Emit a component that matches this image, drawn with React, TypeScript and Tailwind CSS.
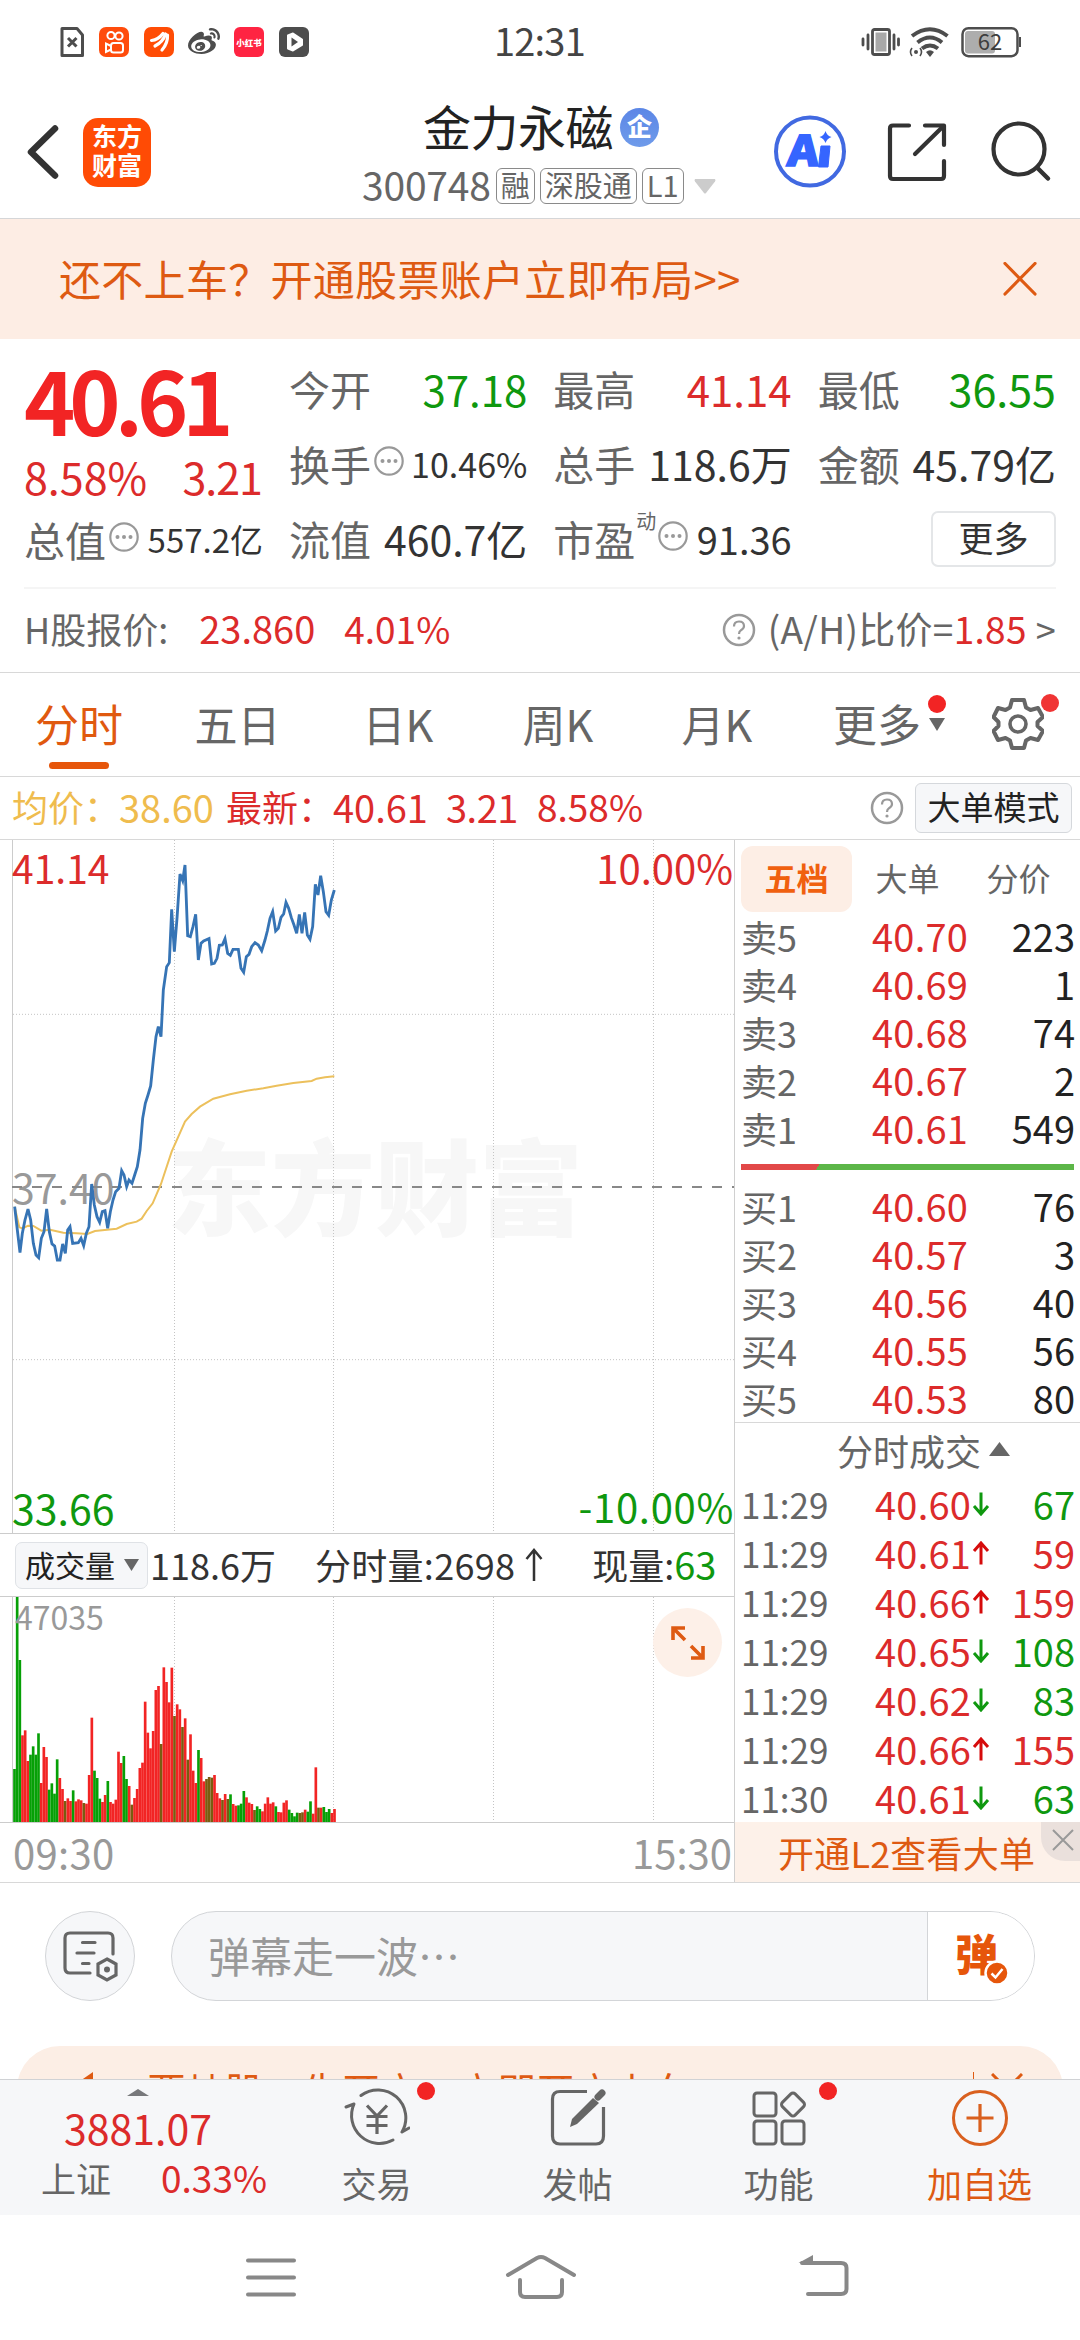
import type { ReactNode } from 'react';
import { FaWeibo } from 'react-icons/fa';

const RED = 'text-[#dc2b2b]';
const GREEN = 'text-[#0f980f]';

interface Level {
  label: string;
  price: string;
  volume: string;
}

interface Tick {
  time: string;
  price: string;
  up: boolean;
  volume: string;
}

const sells: Level[] = [
  { label: '卖5', price: '40.70', volume: '223' },
  { label: '卖4', price: '40.69', volume: '1' },
  { label: '卖3', price: '40.68', volume: '74' },
  { label: '卖2', price: '40.67', volume: '2' },
  { label: '卖1', price: '40.61', volume: '549' },
];

const buys: Level[] = [
  { label: '买1', price: '40.60', volume: '76' },
  { label: '买2', price: '40.57', volume: '3' },
  { label: '买3', price: '40.56', volume: '40' },
  { label: '买4', price: '40.55', volume: '56' },
  { label: '买5', price: '40.53', volume: '80' },
];

const ticks: Tick[] = [
  { time: '11:29', price: '40.60', up: false, volume: '67' },
  { time: '11:29', price: '40.61', up: true, volume: '59' },
  { time: '11:29', price: '40.66', up: true, volume: '159' },
  { time: '11:29', price: '40.65', up: false, volume: '108' },
  { time: '11:29', price: '40.62', up: false, volume: '83' },
  { time: '11:29', price: '40.66', up: true, volume: '155' },
  { time: '11:30', price: '40.61', up: false, volume: '63' },
];

// chart coordinates are in thirds of a pixel
const pricePoints =
  '44,1130 52,1200 60,1268 67,1210 75,1170 84,1137 92,1170 100,1240 108,1275 116,1283 124,1225 132,1205 140,1137 148,1205 156,1242 164,1248 172,1290 180,1290 188,1242 196,1270 203,1200 210,1190 218,1240 235,1238 243,1225 251,1247 259,1210 267,1190 275,1062 283,1125 291,1160 299,1177 307,1145 315,1142 323,1195 331,1145 339,1110 347,1085 357,1075 365,1022 372,1035 380,1070 387,1050 396,1060 404,1035 412,1010 420,960 428,865 436,820 444,795 452,768 460,690 468,620 475,590 483,620 490,480 500,410 508,398 515,238 523,365 531,265 540,132 548,152 555,105 563,317 571,320 579,290 587,253 595,390 603,340 611,333 627,326 635,402 643,400 651,385 658,346 667,345 675,326 683,370 691,376 699,358 715,358 723,415 731,427 739,380 747,373 755,350 765,338 775,345 785,362 795,330 802,303 810,265 818,245 827,303 835,295 843,262 851,252 858,217 866,235 874,263 882,285 890,310 898,253 906,310 914,247 922,315 930,328 938,290 946,163 954,195 962,137 970,185 978,245 986,256 994,210 1003,180';

const averagePoints =
  '44,1130 58,1192 68,1195 84,1187 100,1188 124,1202 150,1199 190,1208 230,1210 262,1212 285,1203 350,1196 380,1182 410,1175 425,1166 440,1143 458,1120 483,1062 515,965 555,875 575,852 600,830 640,806 690,793 740,782 790,775 830,767 880,759 935,753 950,746 975,742 1003,739';

const volumeBars =
  '807g 290g 480g 706r 691r 783r 764g 739g 764g 700g 849r 741r 771r 869g 850g 881g 778g 834r 867r 903m 895r 903r 871g 904r 898r 901r 909m 911r 825r 653r 812g 834g 896g 906r 885r 843g 906r 911r 899r 755r 789r 768g 837g 858r 914m 894r 867r 804r 788r 605r 698r 745r 693r 570r 558r 732m 502r 546r 607r 503r 648m 613r 628r 681m 655r 779m 703r 812r 849r 750g 774r 844r 837m 831m 833m 825r 879r 895r 900m 882r 897m 883g 912r 917r 916g 911g 873g 892r 908r 912r 930m 919g 927g 934r 911r 892r 911r 907r 919g 936r 937r 908r 901r 929g 939g 949g 938g 939m 937m 929r 935g 904g 941r 802r 923m 923r 921g 936g 927g 939r 927r'.split(' ');

const barColors: Record<string, string> = { r: '#f22424', g: '#06a006', m: '#7a5c10' };

const gridXs = [523.5, 1000.5, 1480.5, 1960.5];

const StatusBar = () => (
  <div className="flex h-[84px] items-center pl-[60px] pr-[57px]">
    <svg width="250" height="32" viewBox="0 0 250 32" className="shrink-0">
      <path d="M2 2.5H17L22.5 9V29.5H2Z" fill="none" stroke="#4d4d4d" strokeWidth="3" strokeLinejoin="round" />
      <path d="M8 12L16.500 20.500M16.500 12L8 20.500" stroke="#4d4d4d" strokeWidth="3" />
      <rect x="39" y="1" width="30" height="30" rx="7" fill="#ff4c0c" />
      <g fill="none" stroke="#fff" strokeWidth="2">
        <circle cx="51" cy="9.500" r="3.600" />
        <circle cx="59" cy="10" r="3.600" />
        <rect x="51" y="17" width="12" height="9.500" rx="2.500" />
        <path d="M51 20L46 17.500V26L51 23.500" />
      </g>
      <rect x="84" y="1" width="30" height="30" rx="7" fill="#ff4c05" />
      <g fill="none" stroke="#fff" strokeWidth="3.200" strokeLinecap="round">
        <path d="M91.500 14.500Q98 14 103 7.500" />
        <path d="M95 20Q103 16 105.500 8" />
        <path d="M102 24Q108 17 107.500 9" />
      </g>
      <rect x="174" y="1" width="30" height="30" rx="6" fill="#ff2442" />
      <text x="189" y="19.500" textAnchor="middle" fontSize="8.500" fontWeight="900" fill="#fff">小红书</text>
      <rect x="219" y="1" width="30" height="30" rx="6" fill="#4d4d4d" />
      <path d="M228 9.500L233 7.500L242 13.500V19L233 24.500L228 22.500Z" fill="#fff" stroke="#fff" strokeWidth="2" strokeLinejoin="round" />
      <path d="M231.500 11.500V20.500L238 16Z" fill="#4d4d4d" />
      <FaWeibo x="128" y="0" size={32} color="#4d4d4d" />
    </svg>
    <span className="ml-[184px] pb-1 text-[38px] leading-none tracking-[-0.800px] text-[#444]">12:31</span>
    <svg width="162" height="32" viewBox="0 0 162 32" className="ml-auto shrink-0 overflow-visible">
      <g stroke="#4d4d4d" strokeWidth="2.800" strokeLinecap="round">
        <path d="M2 13V19M7 9V23M33 9V23M37.500 13V19" />
        <rect x="11.500" y="3.500" width="17" height="25" rx="2" fill="none" />
      </g>
      <rect x="14.500" y="6.500" width="11" height="19" fill="#a8a8a8" />
      <g fill="none" stroke="#4d4d4d" strokeWidth="4">
        <path d="M51 10Q69 -3.500 86.500 10" />
        <path d="M56.500 16.500Q69 6.500 81 16.500" />
        <path d="M61 22.500Q69 16.500 77 22.500" />
      </g>
      <path d="M65 26Q69 22.500 73 26L69 31Z" fill="#4d4d4d" />
      <circle cx="55" cy="26" r="2" fill="#4d4d4d" />
      <path d="M51 22Q48 26 51 30M59 22Q62 26 59 30" fill="none" stroke="#4d4d4d" strokeWidth="1.600" />
      <rect x="101.500" y="2.200" width="55" height="28" rx="6" fill="none" stroke="#4d4d4d" strokeWidth="2.500" />
      <rect x="104" y="5" width="30" height="22.500" rx="3" fill="#adadad" />
      <path d="M159 11V21" stroke="#4d4d4d" strokeWidth="2" />
      <text x="129" y="24" textAnchor="middle" fontSize="22" fill="#3d3d3d">62</text>
    </svg>
  </div>
);

const Tag = ({ children }: { children: ReactNode }) => (
  <span className="flex h-[36px] items-center rounded-[6px] border border-[#8a8a8a] px-[4px] pb-[3px] text-[29px] leading-none text-[#666]">
    {children}
  </span>
);

const Header = () => (
  <div className="flex h-[135px] items-start border-b border-[#d5d6d8] pl-[26px]">
    <svg width="34" height="56" viewBox="0 0 34 56" className="mt-[40px]">
      <path d="M29 4.500L5 28L29 51.500" fill="none" stroke="#333" strokeWidth="6.500" strokeLinecap="round" strokeLinejoin="round" />
    </svg>
    <div className="ml-[23px] mt-[34px] flex h-[69px] w-[68px] flex-col items-center rounded-[15px] bg-[#ff4b05] pt-[3px] text-[25px] font-bold leading-[29px] text-white">
      <span>东方</span>
      <span>财富</span>
    </div>
    <div className="ml-[211px] flex flex-col">
      <div className="ml-[61px] mt-[16px] flex items-center">
        <span className="text-[48px] leading-[50px] tracking-[-0.500px] text-[#222]">金力永磁</span>
        <span className="ml-[7px] mt-[5px] flex h-[39px] w-[39px] items-center justify-center rounded-full bg-gradient-to-b from-[#5b86e6] to-[#6f9bea] pb-1 text-[25px] font-black leading-none text-white">
          企
        </span>
      </div>
      <div className="mt-[18px] flex h-[36px] items-center">
        <span className="mr-[5px] pb-[4px] text-[39px] leading-none tracking-[-0.200px] text-[#666]">300748</span>
        <div className="flex gap-[5px]">
          <Tag>融</Tag>
          <Tag>深股通</Tag>
          <Tag>L1</Tag>
        </div>
        <svg width="22" height="15" viewBox="0 0 22 15" className="ml-[10px]">
          <path d="M1 0H21Q22 1 21 2.500L12 14Q11 15 10 14L1 2.500Q0 1 1 0Z" fill="#ccc" />
        </svg>
      </div>
    </div>
    <div className="ml-auto mr-[28px] mt-[30px] flex items-start">
      <svg width="74" height="76" viewBox="0 0 74 76">
        <circle cx="37" cy="37.500" r="34" fill="none" stroke="#4169e1" strokeWidth="4" />
        <text x="14" y="52" fontSize="42" fontWeight="900" fill="#3565ff" stroke="#3565ff" strokeWidth="1.500" transform="skewX(-5) translate(4 0)" textLength="31" lengthAdjust="spacingAndGlyphs">A</text>
        <path d="M48 32H57L55 53H45.500Z" fill="#3565ff" stroke="#3565ff" strokeLinejoin="round" />
        <path d="M52.500 17Q54 22 58.500 23Q54 24.500 52.500 29Q51 24.500 46.500 23Q51 22 52.500 17Z" fill="#3565ff" />
      </svg>
      <svg width="62" height="62" viewBox="0 0 62 62" className="ml-[39px] mt-[7px]">
        <g fill="none" stroke="#333" strokeWidth="4.200" strokeLinecap="round" strokeLinejoin="round">
          <path d="M23 4.500H7Q4 4.500 4 7.500V55Q4 58 7 58H55Q58 58 58 55V40" />
          <path d="M39 4.500H58V24" />
          <path d="M57 5.500L29 33" />
        </g>
      </svg>
      <svg width="62" height="64" viewBox="0 0 62 64" className="ml-[42px] mt-[6px]">
        <circle cx="29" cy="29" r="25.500" fill="none" stroke="#333" strokeWidth="4.200" />
        <path d="M47 47.500L58 58.500" stroke="#333" strokeWidth="4.500" strokeLinecap="round" />
      </svg>
    </div>
  </div>
);

const PromoBanner = () => (
  <div className="flex h-[120px] items-center justify-between bg-[#fdede4] pl-[59px] pr-[43px]">
    <span className="pb-[2px] text-[42px] leading-none tracking-[0.300px] text-[#de5a12]">还不上车？开通股票账户立即布局&gt;&gt;</span>
    <svg width="34" height="34" viewBox="0 0 34 34" className="mb-[1px]">
      <path d="M2 1.500L32 32M32 1.500L2 32" stroke="#de5a12" strokeWidth="3.200" strokeLinecap="round" />
    </svg>
  </div>
);

const DotsIcon = () => (
  <svg width="30" height="30" viewBox="0 0 30 30" className="mb-[5px] ml-[3px] shrink-0">
    <circle cx="15" cy="15" r="13.700" fill="none" stroke="#999" strokeWidth="2.200" />
    <circle cx="8.500" cy="15" r="2" fill="#999" />
    <circle cx="15" cy="15" r="2" fill="#999" />
    <circle cx="21.500" cy="15" r="2" fill="#999" />
  </svg>
);

const HelpIcon = () => (
  <svg width="34" height="34" viewBox="0 0 34 34" className="shrink-0">
    <circle cx="17" cy="17" r="15" fill="none" stroke="#999" strokeWidth="2.500" />
    <path d="M12 13.500Q12 8.500 17 8.500Q22 8.500 22 13Q22 15.500 19 17.200Q17 18.500 17 21" fill="none" stroke="#999" strokeWidth="2.200" />
    <circle cx="17" cy="25" r="1.600" fill="#999" />
  </svg>
);

interface StatProps {
  label: string;
  value: string;
  color?: string;
  sup?: string;
  dots?: boolean;
  size?: string;
}

const Stat = ({ label, value, color = 'text-[#333]', sup, dots, size = 'text-[41px]' }: StatProps) => (
  <div className="flex h-[75px] items-center justify-between whitespace-nowrap leading-none">
    <div className="flex items-center text-[41px] text-[#666]">
      {label}
      {sup && <span className="-mr-[1px] mb-[36px] ml-[1px] text-[20px]">{sup}</span>}
      {dots && <DotsIcon />}
    </div>
    <span className={`${size} ${color}`}>{value}</span>
  </div>
);

const Quote = () => (
  <div className="h-[334px] border-b border-[#d8d8d8] px-[24px] pt-[12px]">
    <div className="flex h-[238px] gap-[26px] border-b-2 border-[#f5f5f5]">
      <div className="w-[239px] shrink-0 whitespace-nowrap leading-none">
        <div className="flex h-[95px] items-center text-[87px] font-bold tracking-[-6px] text-[#f22424]">40.61</div>
        <div className={`flex h-[60px] items-center justify-between pr-[1px] text-[43px] ${RED}`}>
          <span>8.58%</span>
          <span className="tracking-[-1px]">3.21</span>
        </div>
        <div className="flex h-[66px] items-center justify-between text-[41px] text-[#666]">
          <div className="flex items-center">
            总值
            <DotsIcon />
          </div>
          <span className="text-[33px] text-[#333]">557.2亿</span>
        </div>
      </div>
      <div className="grid flex-1 grid-cols-3 content-start gap-x-[26px]">
        <Stat label="今开" value="37.18" color={GREEN} size="text-[42px]" />
        <Stat label="最高" value="41.14" color={RED} size="text-[42px]" />
        <Stat label="最低" value="36.55" color={GREEN} size="text-[43px]" />
        <Stat label="换手" value="10.46%" dots size="text-[34px]" />
        <Stat label="总手" value="118.6万" />
        <Stat label="金额" value="45.79亿" />
        <Stat label="流值" value="460.7亿" />
        <Stat label="市盈" sup="动" value="91.36" dots size="text-[38px]" />
        <div className="flex h-[75px] items-center justify-end">
          <button className="h-[56px] w-[125px] rounded-[7px] border-2 border-[#e4e6e8] pb-[4px] text-[35px] leading-none text-[#333]">更多</button>
        </div>
      </div>
    </div>
    <div className="flex h-[78px] items-center whitespace-nowrap leading-none">
      <span className="text-[36px] text-[#666]">H股报价:</span>
      <span className={`ml-[31px] text-[38px] ${RED}`}>23.860</span>
      <span className={`ml-[29px] text-[37px] ${RED}`}>4.01%</span>
      <div className="ml-auto flex items-center text-[37px] tracking-[0.300px] text-[#666]">
        <div className="mr-[12px] mt-[4px]">
          <HelpIcon />
        </div>
        (A/H)比价=<span className={RED}>1.85</span>
        <span className="ml-[9px] text-[36px]">&gt;</span>
      </div>
    </div>
  </div>
);

const GearIcon = () => (
  <svg width="52" height="54" viewBox="0 0 52 54">
    <path
      d="M20 3H32L34 10.500L38.500 13L46 11L51 20L45.500 25V29L51 34L46 43L38.500 41L34 43.500L32 51H20L18 43.500L13.500 41L6 43L1.500 34L6.500 29V25L1.500 20L6 11L13.500 13L18 10.500Z"
      fill="none"
      stroke="#666"
      strokeWidth="4"
      strokeLinejoin="round"
    />
    <circle cx="26" cy="27" r="8" fill="none" stroke="#666" strokeWidth="3.600" />
  </svg>
);

const ChartTabs = () => (
  <div className="flex h-[104px] border-b border-[#d8d8d8] text-[43px] leading-[101px] text-[#666]">
    <div className="relative w-[158px] text-center text-[44px] text-[#e0590f]">
      分时
      <i className="absolute bottom-[7px] left-[49px] h-[7px] w-[60px] rounded-full bg-[#e6560b]" />
    </div>
    <div className="w-[159px] text-center">五日</div>
    <div className="w-[162px] text-center">日K</div>
    <div className="w-[158px] text-center">周K</div>
    <div className="w-[160px] text-center">月K</div>
    <div className="relative ml-[36px] w-[120px] text-[44px]">
      更多
      <i className="absolute left-[95px] top-[22px] h-[18px] w-[18px] rounded-full bg-[#f22424]" />
      <svg width="16" height="13" viewBox="0 0 16 13" className="absolute left-[96px] top-[45px]">
        <path d="M0 0H16L8 13Z" fill="#666" />
      </svg>
    </div>
    <div className="relative ml-[39px] mt-[24px]">
      <GearIcon />
      <i className="absolute left-[49px] top-[-3px] h-[18px] w-[18px] rounded-full bg-[#f03434]" />
    </div>
  </div>
);

const PriceSummary = () => (
  <div className="flex h-[63px] items-center whitespace-nowrap border-b border-[#d8d8d8] pl-[12px] pr-[8px] text-[38px] leading-none">
    <span className="flex w-[214px] pb-[2px] text-[#efbc4e]">
      <span className="w-[107px] text-[36px]">均价：</span>38.60
    </span>
    <span className={`flex pb-[2px] ${RED}`}>
      <span className="w-[107px] text-[36px]">最新：</span>
      <span className="w-[113px]">40.61</span>
      <span className="w-[91px] tracking-[-0.500px]">3.21</span>
      <span className="text-[37px]">8.58%</span>
    </span>
    <div className="ml-auto mr-[11px]">
      <HelpIcon />
    </div>
    <button className="h-[50px] w-[157px] rounded-[6px] border border-[#d5d8dc] bg-[#f6f7f9] pb-[3px] text-[33px] leading-none text-[#222]">大单模式</button>
  </div>
);

const PriceChart = () => (
  <div className="relative h-[694px] border-b border-[#ccc]">
    <span className="absolute left-[167px] top-[283px] text-[104px] font-black leading-[120px] text-[#f7f7f7]">东方财富</span>
    <span className="absolute left-[12px] top-[326px] text-[41px] leading-[40px] text-[#999]">37.40</span>
    <svg width="734" height="693" viewBox="0 30 2202 2079" className="absolute left-0 top-0">
      <g stroke="#c4c4c4" strokeWidth="3" strokeDasharray="3 6">
        {gridXs.map((x) => (
          <path key={x} d={`M${x} 30V2109`} />
        ))}
        <path d="M39 553H2202M39 1589H2202" />
      </g>
      <path d="M37.500 30V2109" stroke="#ccc" strokeWidth="3" />
      <path d="M36 1071H2202" stroke="#888" strokeWidth="6" strokeDasharray="30 30" />
      <polyline points={averagePoints} fill="none" stroke="#ecc05c" strokeWidth="6" />
      <polyline points={pricePoints} fill="none" stroke="#3674b5" strokeWidth="8.500" />
    </svg>
    <span className={`absolute left-[12px] top-[7px] text-[39px] leading-[40px] ${RED}`}>41.14</span>
    <span className={`absolute right-[1px] top-[7px] text-[40px] leading-[40px] ${RED}`}>10.00%</span>
    <span className={`absolute bottom-[6px] left-[12px] text-[41px] leading-[40px] ${GREEN}`}>33.66</span>
    <span className={`absolute bottom-[7px] right-[0px] text-[40px] leading-[40px] tracking-[0.700px] ${GREEN}`}>-10.00%</span>
  </div>
);

const VolumeChart = () => (
  <div className="relative h-[226px] border-b border-[#ccc]">
    <svg width="734" height="225" viewBox="0 291 2202 675" className="absolute left-0 top-0">
      <g stroke="#c4c4c4" strokeWidth="3" strokeDasharray="3 6">
        {gridXs.map((x) => (
          <path key={x} d={`M${x} 291V966`} />
        ))}
      </g>
      <path d="M37.500 291V966" stroke="#ccc" strokeWidth="3" />
      {volumeBars.map((bar, i) => {
        const top = Number(bar.slice(0, 3));
        return <rect key={i} x={39.5 + i * 8} y={top} width="8" height={966 - top} fill={barColors[bar[3]]} />;
      })}
    </svg>
    <span className="absolute left-[15px] top-[3px] text-[32px] leading-[32px] text-[#999]">47035</span>
    <div className="absolute left-[653px] top-[11px] flex h-[69px] w-[69px] items-center justify-center rounded-full bg-[#fdf0e8]">
      <svg width="36" height="36" viewBox="0 0 36 36">
        <path d="M3 15V3H15M4 4L15 15M21 21L32 32M21 33H33V21" fill="none" stroke="#de5a12" strokeWidth="3.600" />
      </svg>
    </div>
  </div>
);

const VolumeHeader = () => (
  <div className="flex h-[63px] items-center whitespace-nowrap border-b border-[#ccc] pl-[15px] text-[36px] leading-none text-[#333]">
    <button className="flex h-[47px] w-[133px] items-center rounded-[7px] border border-[#dfe2e6] bg-[#f6f7f9] pl-[9px] text-[30px] text-[#222]">
      <span className="pb-[3px]">成交量</span>
      <svg width="15" height="12" viewBox="0 0 15 12" className="ml-[9px]">
        <path d="M0 0H15L7.500 12Z" fill="#666" />
      </svg>
    </button>
    <span className="ml-[2px] pb-[2px]">118.6万</span>
    <span className="ml-[39px] pb-[2px] tracking-[0.300px]">分时量:2698</span>
    <svg width="18" height="34" viewBox="0 0 18 34" className="ml-[10px]">
      <path d="M9 33V2M1.500 11L9 2L16.500 11" fill="none" stroke="#333" strokeWidth="2.500" />
    </svg>
    <span className="ml-[49px] pb-[2px]">
      现量:<span className={`text-[38px] ${GREEN}`}>63</span>
    </span>
  </div>
);

const LevelRow = ({ level }: { level: Level }) => (
  <div className="flex h-[48px] items-center text-[38px] leading-none">
    <span className="w-[86px] text-[36px] text-[#666]">{level.label}</span>
    <span className={`w-[141px] text-right tracking-[0.200px] ${RED}`}>{level.price}</span>
    <span className="ml-auto text-[#222]">{level.volume}</span>
  </div>
);

const TickArrow = ({ up }: { up: boolean }) => (
  <svg width="18" height="24" viewBox="0 0 18 24" className="ml-[1px]">
    {up ? (
      <path d="M9 23.500V2.500M2 10L9 2L16 10" fill="none" stroke="#d60b0b" strokeWidth="3" />
    ) : (
      <path d="M9 0.500V21.500M2 14L9 22L16 14" fill="none" stroke="#0f980f" strokeWidth="3" />
    )}
  </svg>
);

const OrderBook = () => (
  <div className="flex flex-1 flex-col border-l border-[#d0d0d0]">
    <div className="mt-[6px] flex h-[66px] pl-[6px] text-[32px] leading-[63px] text-[#666]">
      <span className="w-[111px] rounded-[12px] bg-[#fdeee5] text-center font-bold text-[#f0600f]">五档</span>
      <span className="w-[111px] text-center">大单</span>
      <span className="w-[111px] text-center">分价</span>
    </div>
    <div className="pl-[6px] pr-[5px]">
      {sells.map((level) => (
        <LevelRow key={level.label} level={level} />
      ))}
    </div>
    <div className="mx-[6px] mb-[12px] mt-[12px] h-[6px] bg-[linear-gradient(120deg,#e24848_68px,#5cb648_68px)]" />
    <div className="pl-[6px] pr-[5px]">
      {buys.map((level) => (
        <LevelRow key={level.label} level={level} />
      ))}
    </div>
    <div className="flex h-[57px] items-center justify-center border-t border-[#d8d8d8] pl-[32px] text-[36px] leading-none text-[#666]">
      <span className="pb-[3px]">分时成交</span>
      <svg width="21" height="14" viewBox="0 0 21 14" className="ml-[8px] mb-[4px]">
        <path d="M0 14H21L10.500 0Z" fill="#666" />
      </svg>
    </div>
    <div className="pl-[6px] pr-[5px]">
      {ticks.map((tick, i) => (
        <div key={i} className="flex h-[49px] items-center text-[38px] leading-none">
          <span className="w-[86px] text-[35px] text-[#666]">{tick.time}</span>
          <span className={`w-[144px] text-right tracking-[0.200px] ${RED}`}>{tick.price}</span>
          <TickArrow up={tick.up} />
          <span className={`ml-auto ${tick.up ? RED : GREEN}`}>{tick.volume}</span>
        </div>
      ))}
    </div>
    <div className="relative mt-auto h-[60px] bg-[#fdf1e9] pl-[43px] text-[36px] leading-[60px] tracking-[0.200px] text-[#de5a12]">
      开通L2查看大单
      <span className="absolute right-0 top-0 flex h-[39px] w-[39px] items-center justify-center rounded-bl-[24px] bg-[#eae0dc] pb-[4px] pl-[4px]">
        <svg width="22" height="22" viewBox="0 0 22 22">
          <path d="M1 1L21 21M21 1L1 21" stroke="#999" strokeWidth="2" />
        </svg>
      </span>
    </div>
  </div>
);

const Comments = () => (
  <div className="h-[196px] overflow-hidden pt-[28px]">
    <div className="flex h-[90px] items-center pl-[45px]">
      <div className="flex h-[90px] w-[90px] items-center justify-center rounded-full border border-[#d3d5d8] bg-[#f6f7f9]">
        <svg width="56" height="52" viewBox="0 0 56 52">
          <g fill="none" stroke="#666" strokeWidth="3.200" strokeLinecap="round">
            <path d="M51 24V8Q51 3 46 3H8Q3 3 3 8V38Q3 43 8 43H28" />
            <path d="M20.500 12.500H33M15 23H32M20.500 33.500H27" />
            <path d="M45 29L54 34V45L45 50L36 45V34Z" />
          </g>
          <circle cx="45" cy="39.500" r="3" fill="#666" />
        </svg>
      </div>
      <div className="ml-[36px] flex h-[90px] w-[864px] items-center overflow-hidden rounded-full border border-[#d3d5d8] bg-[#f6f7f9]">
        <span className="flex-1 pb-[2px] pl-[36px] text-[42px] leading-none text-[#999]">弹幕走一波…</span>
        <div className="relative h-full w-[107px] border-l border-[#d3d5d8] bg-white pl-[27px] text-[43px] font-black leading-[81px] text-[#e6560b]">
          弹
          <svg width="26" height="26" viewBox="0 0 26 26" className="absolute left-[56px] top-[48px]">
            <circle cx="13" cy="13" r="11.500" fill="#e6560b" stroke="#fff" strokeWidth="2.500" />
            <path d="M7.500 13.500L11.500 17.500L18.500 9" fill="none" stroke="#fff" strokeWidth="2.500" />
          </svg>
        </div>
      </div>
    </div>
    <div className="mx-[17px] mt-[45px] flex h-[86px] items-center rounded-[43px] bg-[#fceee5] pl-[54px] pr-[40px] text-[39px] leading-none text-[#de5a12]">
      <svg width="36" height="36" viewBox="0 0 36 36" className="mr-[40px]">
        <path d="M2 10H9L22 1V35L9 26H2Z" fill="#de5a12" />
      </svg>
      <span className="tracking-[-0.100px]">要炒股，先开户，立即开户上车</span>
      <i className="ml-auto mr-[17px] h-[34px] w-px bg-[#de5a12]" />
      <svg width="32" height="32" viewBox="0 0 32 32">
        <path d="M1 1L31 31M31 1L1 31" stroke="#de5a12" strokeWidth="3" />
      </svg>
    </div>
  </div>
);

interface ToolProps {
  label: string;
  icon: ReactNode;
  badge?: boolean;
  active?: boolean;
}

const Tool = ({ label, icon, badge, active }: ToolProps) => (
  <div className={`relative flex w-[201px] flex-col items-center pt-[8px] text-[35px] leading-none ${active ? 'text-[#de5a12]' : 'text-[#666]'}`}>
    {icon}
    <span className="mt-[17px]">{label}</span>
    {badge && <i className="absolute left-[141px] top-[2px] h-[18px] w-[18px] rounded-full bg-[#f22424]" />}
  </div>
);

const BottomBar = () => (
  <div className="flex h-[136px] border-t border-[#d0d2d5] bg-[#f6f7f9]">
    <div className="flex w-[276px] flex-col items-center leading-none">
      <svg width="22" height="7" viewBox="0 0 22 7" className="mt-[9px]">
        <path d="M0 7L11 0L22 7Z" fill="#77787b" />
      </svg>
      <span className={`mt-[11px] text-[41px] ${RED}`}>3881.07</span>
      <div className="mt-[11px] flex w-full items-center justify-between pl-[41px] pr-[9px]">
        <span className="text-[35px] text-[#666]">上证</span>
        <span className={`text-[37px] ${RED}`}>0.33%</span>
      </div>
    </div>
    <div className="flex">
      <Tool
        label="交易"
        badge
        icon={
          <svg width="66" height="60" viewBox="0 0 66 60">
            <g fill="none" stroke="#666" strokeWidth="3" strokeLinecap="round" strokeLinejoin="round">
              <path d="M17 7.500A28 28 0 0 1 58 44L65 40" />
              <path d="M2 19L10 16A28 28 0 0 0 49 52" />
            </g>
            <path d="M23 17.500L33 28L43 17.500M33 28V46M22.500 28.500H43.500M22.500 37.500H43.500" fill="none" stroke="#666" strokeWidth="3.200" />
          </svg>
        }
      />
      <Tool
        label="发帖"
        icon={
          <svg width="58" height="60" viewBox="0 0 58 60">
            <path d="M38 3.500H11Q3.500 3.500 3.500 11V48Q3.500 56 11 56H47Q54.500 56 54.500 48V19" fill="none" stroke="#666" strokeWidth="3.200" />
            <path d="M44 10L50 15L28 36L21 39L23 31Z" fill="#666" />
            <path d="M49 9L53 5" stroke="#666" strokeWidth="7" strokeLinecap="round" />
          </svg>
        }
      />
      <Tool
        label="功能"
        badge
        icon={
          <svg width="56" height="60" viewBox="0 0 56 60">
            <g fill="none" stroke="#666" strokeWidth="3">
              <rect x="3" y="5" width="22" height="23" rx="3" />
              <rect x="3" y="33" width="22" height="23" rx="3" />
              <rect x="31" y="33" width="22" height="23" rx="3" />
              <rect x="33" y="7.500" width="18" height="18" rx="3" transform="rotate(45 42 16.500)" />
            </g>
          </svg>
        }
      />
      <Tool
        label="加自选"
        active
        icon={
          <svg width="58" height="60" viewBox="0 0 58 60">
            <circle cx="29" cy="30" r="26.500" fill="none" stroke="#d9601f" strokeWidth="3" />
            <path d="M29 16V44M15.500 30H42.500" stroke="#d9601f" strokeWidth="3.200" />
          </svg>
        }
      />
    </div>
  </div>
);

const SystemNav = () => (
  <div className="flex h-[125px] items-start pl-[245px] pt-[39px]">
    <svg width="52" height="46" viewBox="0 0 52 46">
      <path d="M3 6.500H49M3 23.500H49M3 40.500H49" stroke="#888" strokeWidth="4" strokeLinecap="round" />
    </svg>
    <svg width="74" height="46" viewBox="0 0 74 46" className="ml-[207px]">
      <path d="M4 21L33 4Q37 2 41 4L70 21M16 26V38Q16 43 21 43H53Q58 43 58 38V26" fill="none" stroke="#888" strokeWidth="4" strokeLinecap="round" />
    </svg>
    <svg width="52" height="46" viewBox="0 0 52 46" className="ml-[220px]">
      <path d="M4 9H43Q48.500 9 48.500 14V35Q48.500 40 43 40H10" fill="none" stroke="#888" strokeWidth="4" strokeLinecap="round" />
      <path d="M0.500 9L15 1V9Z" fill="#888" />
    </svg>
  </div>
);

export default function App() {
  return (
    <div lang="zh-CN" className="flex h-[2340px] w-[1080px] flex-col overflow-hidden bg-white font-['Noto_Sans_CJK_SC',sans-serif]">
      <StatusBar />
      <Header />
      <PromoBanner />
      <Quote />
      <ChartTabs />
      <PriceSummary />
      <div className="flex h-[1043px] border-b border-[#d8d8d8]">
        <div className="w-[734px]">
          <PriceChart />
          <VolumeHeader />
          <VolumeChart />
          <div className="flex h-[59px] justify-between pl-[13px] pr-[2px] text-[40px] leading-[58px] text-[#999]">
            <span className="tracking-[0.300px]">09:30</span>
            <span>15:30</span>
          </div>
        </div>
        <OrderBook />
      </div>
      <Comments />
      <BottomBar />
      <SystemNav />
    </div>
  );
}
